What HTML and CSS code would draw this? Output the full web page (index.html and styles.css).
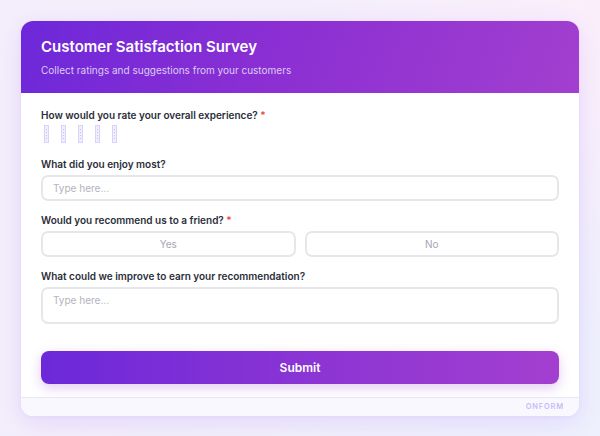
FILE: index.html
```html
<!DOCTYPE html>
<html>
<head>
<meta charset="utf-8">
<link rel="stylesheet" href="styles.css">
</head>
<body>
<div class="page">
  <div class="card">
    <div class="header">
      <div class="title">Customer Satisfaction Survey</div>
      <div class="subtitle">Collect ratings and suggestions from your customers</div>
    </div>
    <div class="body">
      <div class="label">How would you rate your overall experience? <span class="req">*</span></div>
      <div class="rating">
        <span class="star"></span><span class="star"></span><span class="star"></span><span class="star"></span><span class="star"></span>
      </div>
      <div class="label">What did you enjoy most?</div>
      <div class="input">Type here...</div>
      <div class="label">Would you recommend us to a friend? <span class="req">*</span></div>
      <div class="choices">
        <div class="choice">Yes</div>
        <div class="choice">No</div>
      </div>
      <div class="label">What could we improve to earn your recommendation?</div>
      <div class="textarea">Type here...</div>
      <div class="submit">Submit</div>
    </div>
    <div class="footer">ONFORM</div>
  </div>
</div>
</body>
</html>
```
FILE: styles.css
```css
* { box-sizing: border-box; }
html, body { margin: 0; padding: 0; }
body {
  width: 600px;
  height: 436px;
  overflow: hidden;
  font-family: Inter, "Noto Sans", sans-serif;
  background: linear-gradient(135deg, #f4eefc 0%, #f3eefb 50%, #eef0fd 100%);
}
.page {
  width: 600px;
  height: 436px;
  padding: 21px 21px 0 21px;
  background: radial-gradient(circle at 100% 0%, #fbeefb 0%, rgba(251,238,251,0) 40%);
}
.card {
  width: 558px;
  background: #fff;
  border-radius: 12px;
  overflow: hidden;
  box-shadow: 0 6px 24px rgba(124, 58, 237, 0.12), 0 1px 4px rgba(124, 58, 237, 0.06);
}
.header {
  height: 72px;
  padding: 16px 20px 0 20px;
  background: linear-gradient(110deg, #6d28d9 0%, #8b2fd3 45%, #a23fcf 100%);
  color: #fff;
}
.title {
  font-size: 15px;
  line-height: 20px;
  font-weight: 600;
}
.subtitle {
  margin-top: 6px;
  font-size: 10px;
  line-height: 14px;
  color: #ddccf6;
}
.body {
  padding: 15px 20px 13px 20px;
}
.label {
  font-size: 10px;
  line-height: 14px;
  font-weight: 600;
  color: #2a2e39;
}
.req { color: #ef4444; }
.rating {
  display: flex;
  gap: 12px;
  margin: 3px 0 14px 3px;
  height: 18px;
}
.star {
  width: 5px;
  height: 18px;
  border: 1px solid #d9d3fb;
  background: #f0edfe;
  position: relative;
}
.star::after {
  content: "";
  position: absolute;
  left: 1px; right: 1px; top: 3px; bottom: 3px;
  background: repeating-linear-gradient(180deg, #c9c0f7 0 1px, transparent 1px 3px);
}
.input, .textarea, .choice {
  border: 2px solid #e6e7eb;
  border-radius: 7px;
  font-size: 10px;
  color: #b1b4bb;
}
.input {
  margin-top: 4px;
  height: 26px;
  padding: 0 10px;
  line-height: 22px;
  margin-bottom: 12px;
}
.choices {
  margin-top: 4px;
  display: flex;
  gap: 9px;
  margin-bottom: 12px;
}
.choice {
  flex: 1;
  height: 26px;
  line-height: 22px;
  text-align: center;
  color: #a3a7af;
}
.textarea {
  margin-top: 4px;
  height: 37px;
  padding: 4px 10px;
  line-height: 14px;
}
.submit {
  margin-top: 27px;
  height: 33px;
  border-radius: 8px;
  background: linear-gradient(90deg, #6c28d9 0%, #8a34d4 50%, #a33fcf 100%);
  color: #fff;
  font-size: 12px;
  font-weight: 600;
  line-height: 33px;
  text-align: center;
  box-shadow: 0 4px 12px rgba(139, 47, 211, 0.25);
}
.footer {
  height: 19px;
  border-top: 1px solid #ebe6f3;
  background: #faf8ff;
  text-align: right;
  padding-right: 15px;
  font-size: 7.5px;
  line-height: 18px;
  font-weight: 600;
  letter-spacing: 0.8px;
  color: #c9bbf9;
}
```
